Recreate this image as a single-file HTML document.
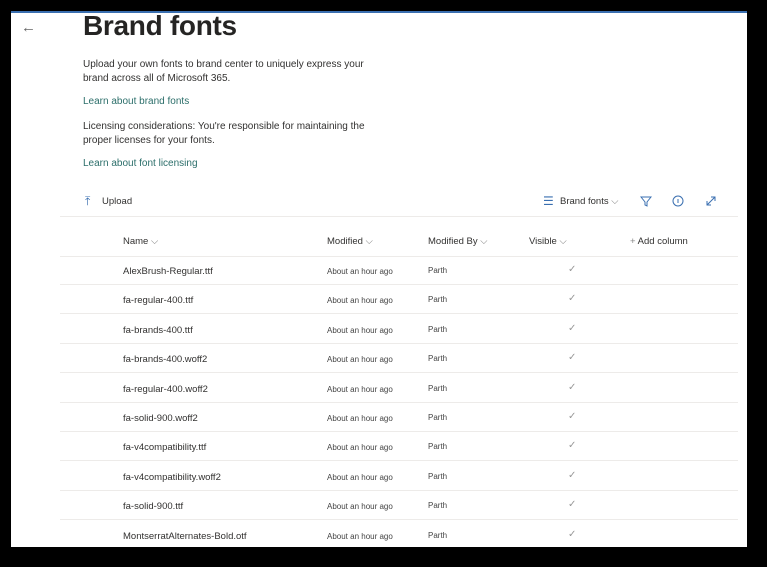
<!DOCTYPE html>
<html><head><style>
body{margin:0;width:767px;height:567px;background:#000;position:relative;overflow:hidden;font-family:"Liberation Sans",sans-serif;color:#323130}
#p{position:absolute;left:11px;top:11px;width:736px;height:536px;background:#fff;border-top:2px solid #3a6fb0;box-sizing:border-box}
.a{position:absolute;white-space:nowrap}
h1{position:absolute;left:72px;top:-3px;margin:0;font-size:28px;font-weight:bold;color:#252423;letter-spacing:-0.3px}
.t{font-size:10px;line-height:14px;color:#323130}
.l{font-size:10px;color:#2b6e6a}
.hr{position:absolute;left:49px;width:678px;height:1px;background:#edebe9}
.c{font-size:9.5px}
.s{font-size:8px;color:#444}
.ck{font-size:10px;color:#999}
</style></head><body>
<div id="p">
<div class="a" style="left:10px;top:6px;font-size:15px;color:#666">←</div>
<h1>Brand fonts</h1>
<div class="a t" style="left:72px;top:45px">Upload your own fonts to brand center to uniquely express your<br>brand across all of Microsoft 365.</div>
<div class="a l" style="left:72px;top:83px">Learn about brand fonts</div>
<div class="a t" style="left:72px;top:107px">Licensing considerations: You're responsible for maintaining the<br>proper licenses for your fonts.</div>
<div class="a l" style="left:72px;top:145px">Learn about font licensing</div>
<div class="a" style="left:74px;top:181px;font-size:12px;color:#3a6fb0">⤒</div>
<div class="a c" style="left:91px;top:183px">Upload</div>
<div class="a" style="left:532px;top:181px;font-size:12px;color:#3a6fb0">☰</div>
<div class="a c" style="left:549px;top:183px">Brand fonts <span style="color:#888">⌵</span></div>
<svg class="a" style="left:629px;top:182px" width="12" height="12"><path d="M1 2h10L7 7v4L5 10V7z" fill="none" stroke="#3a6fb0"/></svg>
<svg class="a" style="left:661px;top:182px" width="12" height="12"><circle cx="6" cy="6" r="5" fill="none" stroke="#3a6fb0"/><path d="M6 4v4" stroke="#3a6fb0"/></svg>
<svg class="a" style="left:694px;top:182px" width="12" height="12"><path d="M2 10L10 2M6 2h4v4M2 6v4h4" fill="none" stroke="#3a6fb0"/></svg>
<div class="hr" style="top:203px"></div>
<div class="a c" style="left:112px;top:223px">Name <span style="color:#888">⌵</span></div>
<div class="a c" style="left:316px;top:223px">Modified <span style="color:#888">⌵</span></div>
<div class="a c" style="left:417px;top:223px">Modified By <span style="color:#888">⌵</span></div>
<div class="a c" style="left:518px;top:223px">Visible <span style="color:#888">⌵</span></div>
<div class="a c" style="left:619px;top:223px"><span style="color:#888">+</span> Add column</div>
<div class="hr" style="top:243px"></div>
<div id="rows"></div>
</div>
<script>
var n=["AlexBrush-Regular.ttf","fa-regular-400.ttf","fa-brands-400.ttf","fa-brands-400.woff2","fa-regular-400.woff2","fa-solid-900.woff2","fa-v4compatibility.ttf","fa-v4compatibility.woff2","fa-solid-900.ttf","MontserratAlternates-Bold.otf"],h="";
n.forEach(function(x,i){var y=259+i*29.4;
h+='<div class="a c" style="left:112px;top:'+(y-6)+'px">'+x+'</div><div class="a s" style="left:316px;top:'+(y-5)+'px">About an hour ago</div><div class="a s" style="left:417px;top:'+(y-6)+'px">Parth</div><div class="a ck" style="left:557px;top:'+(y-8)+'px">✓</div>';
if(i<9)h+='<div class="hr" style="top:'+(y+12)+'px"></div>';});
document.getElementById("rows").outerHTML=h;
</script>
</body></html>
